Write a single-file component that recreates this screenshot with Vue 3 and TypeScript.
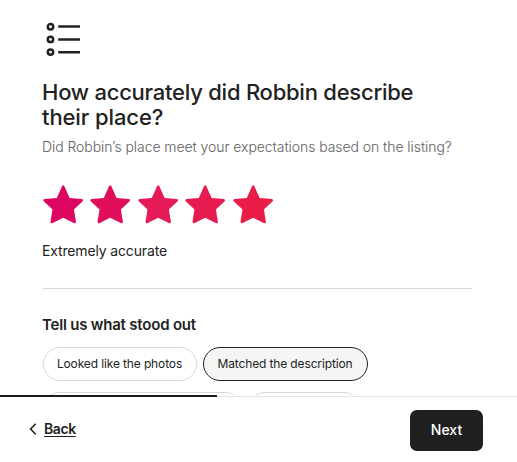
<script setup lang="ts">
import { ref } from 'vue'

const starColors = ['#dc0660', '#e10f5b', '#e61a57', '#e71b4f', '#e91d48']
const rating = ref(5)
const tags = ['Looked like the photos', 'Matched the description', '', '']
const selected = ref('Matched the description')
</script>

<template>
  <div class="screen">
    <main class="content">
      <svg class="list-icon" width="38" height="38" viewBox="0 0 38 38" fill="none" stroke="#222" stroke-width="2.5">
        <circle cx="8.5" cy="6.7" r="2.7" />
        <circle cx="8.5" cy="19.4" r="2.7" />
        <circle cx="8.5" cy="32.1" r="2.7" />
        <path d="M16.2 6.6H38M16.2 19.4H38M16.2 32.2H38" />
      </svg>
      <h1><span class="line first">How accurately did Robbin describe</span> <span class="line second">their place?</span></h1>
      <p class="subtitle">Did Robbin’s place meet your expectations based on the listing?</p>
      <div class="stars">
        <svg v-for="(color, i) in starColors" :key="i" width="42" height="42" viewBox="0 0 42 42" @click="rating = i + 1">
          <path
            :fill="i < rating ? color : '#ddd'"
            d="M20 2.2Q21.2 .2 22.4 2.2L27.6 14L39.8 15.1Q42 15.7 40.4 17.5L31.9 25.6L33.9 37.8Q33.8 40 31.7 39.1L21.2 33.8L10.7 39.1Q8.6 40 8.5 37.8L10.5 25.6L2 17.5Q.4 15.7 2.6 15.1L14.8 14Z"
          />
        </svg>
      </div>
      <p class="rating">Extremely accurate</p>
      <hr />
      <h2>Tell us what stood out</h2>
      <div class="tags">
        <button v-for="(tag, i) in tags" :key="i" :class="['tag', `tag-${i + 1}`, { selected: tag === selected }]" @click="selected = tag">
          <span>{{ tag }}</span>
        </button>
      </div>
    </main>
    <footer>
      <div class="progress"><div class="done"></div></div>
      <div class="actions">
        <button class="back">
          <svg width="8" height="12" viewBox="0 0 8 12" fill="none" stroke="#222" stroke-width="1.6">
            <path d="M6.7 .8L1.6 6L6.7 11.2" />
          </svg>
          <span>Back</span>
        </button>
        <button class="next">Next</button>
      </div>
    </footer>
  </div>
</template>

<style>
body { margin: 0; background: #fff; }
</style>

<style scoped>
.screen {
  display: flex;
  flex-direction: column;
  width: 517px;
  height: 462px;
  overflow: hidden;
  background: #fff;
  color: #222;
  font-family: Inter, "Liberation Sans", sans-serif;
}
.content {
  display: flex;
  flex-direction: column;
  height: 395px;
  padding: 20px 45px 0 42px;
  box-sizing: border-box;
  overflow: hidden;
}
.content > * { flex: none; }
h1, h2, p { margin: 0; }
h1 { margin-top: 22px; font-size: 22px; line-height: 25px; font-weight: 500; }
.line { display: block; white-space: nowrap; }
.first { letter-spacing: -0.24px; }
.second { letter-spacing: -0.1px; }
.subtitle { margin-top: 7px; font-size: 14px; line-height: 20px; font-weight: 300; color: #5e5e5e; white-space: nowrap; letter-spacing: -0.06px; }
.stars { display: flex; gap: 5.4px; height: 42px; margin-top: 27px; }
.stars svg { flex: none; cursor: pointer; }
.rating { margin-top: 15px; font-size: 14px; line-height: 20px; letter-spacing: -0.15px; }
hr { width: 429px; height: 1px; margin: 27px 0 0 1px; border: 0; background: #d8d8d8; }
h2 { margin-top: 26px; font-size: 15px; line-height: 20px; font-weight: 600; letter-spacing: -0.2px; }
.tags { display: flex; flex-wrap: wrap; gap: 11px 6px; margin: 12px 0 0 1px; }
button { font: inherit; color: inherit; cursor: pointer; padding: 0; }
.tag {
  box-sizing: border-box;
  height: 34px;
  border: 1px solid #d8d8d8;
  border-radius: 17px;
  background: #fff;
  font-size: 12px;
  letter-spacing: -0.13px;
  white-space: nowrap;
}
.tag span { position: relative; top: -1px; left: -0.5px; }
.tag-1 { width: 154px; }
.tag-2 { width: 165px; }
.tag-3 { width: 199px; }
.tag-4 { width: 113px; }
.tag.selected { border: 1.5px solid #222; background: #f5f5f5; }
.progress { height: 2px; background: linear-gradient(#fff 50%, #e4e4e4 50%); }
.done { width: 217px; height: 2px; background: #1c1b1d; }
.actions { display: flex; justify-content: space-between; padding: 13px 34px 0 29px; }
.back { display: flex; align-items: center; gap: 7px; height: 37px; border: 0; background: none; font-size: 14px; font-weight: 600; letter-spacing: -0.4px; }
.back span { text-decoration: underline; text-decoration-thickness: 1px; text-underline-offset: 2px; }
.next { width: 73px; height: 41px; padding-bottom: 2px; border: 0; border-radius: 7px; background: #202020; color: #fff; font-size: 14px; font-weight: 500; }
</style>
